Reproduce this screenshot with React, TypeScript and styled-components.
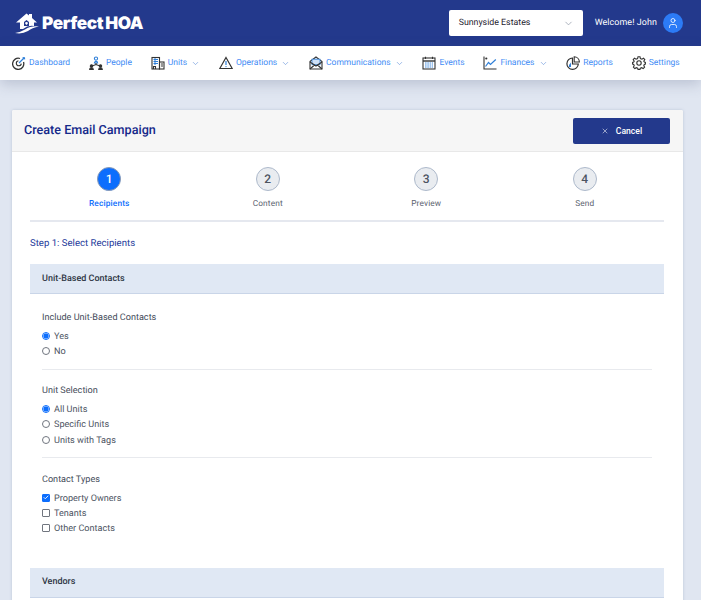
import React from "react";
import styled, { createGlobalStyle } from "styled-components";
import { ChevronDown, User, X, Check } from "lucide-react";

const GlobalStyle = createGlobalStyle`
  html, body {
    margin: 0;
    padding: 0;
    height: 600px;
    overflow: hidden;
    background: #e0e6f1;
    font-family: Roboto, "Liberation Sans", sans-serif;
    text-rendering: geometricPrecision;
  }
`;

const Page = styled.div`
  width: 701px;
  height: 600px;
  overflow: hidden;
`;

const Header = styled.header`
  height: 46px;
  background: #23398c;
  display: flex;
  align-items: center;
  justify-content: space-between;
  padding: 0 18px 0 14px;
`;

const Logo = styled.div`
  display: flex;
  align-items: center;
  gap: 2px;
  color: #fff;
  font-family: Inter, sans-serif;
  font-weight: 900;
  font-size: 17.2px;
  letter-spacing: -0.4px;
  word-spacing: -1px;
`;

const HeaderRight = styled.div`
  display: flex;
  align-items: center;
`;

const CommunitySelect = styled.div`
  width: 134px;
  height: 26px;
  box-sizing: border-box;
  background: #fff;
  border-radius: 2px;
  display: flex;
  align-items: center;
  justify-content: space-between;
  padding: 0 9px 0 10px;
  font-size: 8.8px;
  color: #1f2430;
  margin-right: 12px;
  svg {
    color: #8b93a3;
  }
`;

const Welcome = styled.span`
  color: #fff;
  font-size: 8.9px;
  letter-spacing: 0.1px;
  margin-right: 6px;
`;

const Avatar = styled.div`
  width: 20px;
  height: 20px;
  border-radius: 50%;
  background: #2c7bf6;
  color: #fff;
  display: flex;
  align-items: center;
  justify-content: center;
`;

const Nav = styled.nav`
  height: 34px;
  background: #fff;
  display: flex;
  align-items: center;
  padding-left: 12px;
  gap: 18.8px;
  box-shadow: 0 4px 14px rgba(70, 85, 120, 0.25);
  position: relative;
`;

const NavItem = styled.div`
  display: flex;
  align-items: center;
  color: #3f8cf5;
  font-size: 8.5px;
  white-space: nowrap;
  svg.chev {
    color: #5f8fd8;
    margin-left: 4px;
  }
`;

const NavIcon = styled.svg`
  width: 14px;
  height: 14px;
  margin-right: 3px;
  flex: none;
  fill: none;
  stroke: #333;
  stroke-width: 1.1;
`;

const Main = styled.main`
  padding: 30px 18px 0 12px;
`;

const Card = styled.section`
  background: #fff;
  border-radius: 2px;
  box-shadow: 0 0 3px rgba(120, 135, 165, 0.35);
  height: 520px;
  overflow: hidden;
`;

const CardHeader = styled.div`
  height: 42px;
  box-sizing: border-box;
  background: #f6f6f6;
  border-bottom: 1px solid #e8e8e8;
  display: flex;
  align-items: center;
  justify-content: space-between;
  padding: 0 13px 0 12px;
`;

const CardTitle = styled.h1`
  margin: 0;
  font-size: 12.6px;
  font-weight: 500;
  color: #15298a;
`;

const CancelButton = styled.button`
  width: 97px;
  height: 26px;
  border: none;
  border-radius: 2px;
  background: #23398c;
  color: #fff;
  display: flex;
  align-items: center;
  justify-content: center;
  gap: 7px;
  font-family: inherit;
  font-size: 8.6px;
  font-weight: 500;
  padding: 0;
`;

const CardBody = styled.div`
  padding: 0 19px 0 18px;
`;

const Stepper = styled.div`
  display: grid;
  grid-template-columns: repeat(4, 1fr);
  box-sizing: border-box;
  padding-top: 15px;
  height: 70px;
  border-bottom: 2px solid #e5e8ef;
`;

const Step = styled.div<{ $active?: boolean }>`
  display: flex;
  flex-direction: column;
  align-items: center;
  color: ${({ $active }) => ($active ? "#0d6efd" : "#5c6370")};
  font-size: 8.3px;
  font-weight: ${({ $active }) => ($active ? 500 : 400)};
  letter-spacing: 0.15px;
`;

const StepCircle = styled.div<{ $active?: boolean }>`
  width: 24px;
  height: 24px;
  box-sizing: border-box;
  border-radius: 50%;
  display: flex;
  align-items: center;
  justify-content: center;
  margin-bottom: 8px;
  font-size: 12px;
  font-weight: 500;
  background: ${({ $active }) => ($active ? "#0d6efd" : "#e9ecf0")};
  border: 1px solid ${({ $active }) => ($active ? "#8a9ab5" : "#adb9cb")};
  color: ${({ $active }) => ($active ? "#fff" : "#4c5360")};
`;

const StepTitle = styled.h2`
  margin: 0;
  padding: 16px 0 14px;
  font-size: 9.6px;
  line-height: 12px;
  font-weight: 400;
  color: #23399a;
`;

const SectionHeader = styled.div`
  height: 30px;
  box-sizing: border-box;
  background: #e0e8f4;
  border-bottom: 1px solid #c9d5e8;
  display: flex;
  align-items: center;
  padding: 0 12px;
  font-size: 9px;
  font-weight: 500;
  color: #2f3644;
`;

const SectionBody = styled.div`
  padding: 0 12px 21.5px;
`;

const FieldGroup = styled.div`
  padding: 18px 0 9px;
  & + & {
    border-top: 1px solid #e8eaee;
    padding-top: 15.5px;
  }
`;

const FieldLabel = styled.div`
  font-size: 9.1px;
  line-height: 12px;
  color: #454c5a;
  margin-bottom: 5px;
`;

const Option = styled.div`
  display: flex;
  align-items: center;
  height: 15.4px;
  font-size: 9.1px;
  color: #4d5462;
`;

const RadioMark = styled.span<{ $checked?: boolean }>`
  width: 8px;
  height: 8px;
  box-sizing: border-box;
  border-radius: 50%;
  border: 1px solid ${({ $checked }) => ($checked ? "#0d6efd" : "#71767f")};
  background: ${({ $checked }) =>
    $checked ? "radial-gradient(circle, #0d6efd 2.2px, #cfe2ff 2.8px)" : "#fff"};
  margin: 0 4px 2px 0;
  flex: none;
`;

const CheckMark = styled.span<{ $checked?: boolean }>`
  width: 8px;
  height: 8px;
  box-sizing: border-box;
  border-radius: 1px;
  border: 1px solid ${({ $checked }) => ($checked ? "#0d6efd" : "#71767f")};
  background: ${({ $checked }) => ($checked ? "#0d6efd" : "#fff")};
  color: #fff;
  margin: 0 4px 2px 0;
  flex: none;
  display: flex;
  align-items: center;
  justify-content: center;
`;

const LogoMark = () => (
  <svg width="26" height="22" viewBox="0 0 26 22">
    <path d="M2 10.5 L12.5 1.5 L15 3.6 V2 H18 V6 L23 10.5 H20 V14 Q14 13 9 17 H6 V10.5 Z" fill="#fff" />
    <path d="M10 10 L12.5 8 L15 10 V14 H10 Z" fill="#23398c" />
    <path d="M12.5 10 a1.4 1.4 0 0 1 1.4 1.4 L12.5 13 L11.1 11.4 A1.4 1.4 0 0 1 12.5 10" fill="#fff" />
    <path d="M1 21 Q7 20 11 17.5 Q17 13.5 25 14.5 Q18 15.5 14 19 Q8 22.5 1 21 Z" fill="#fff" />
  </svg>
);

const icons: Record<string, React.ReactNode> = {
  dashboard: (
    <>
      <path d="M11.5 6 A5.6 5.6 0 1 1 8 2.5" strokeWidth="1.3" />
      <path d="M9.3 7.6 A2.5 2.5 0 1 1 6.4 4.8" />
      <path d="M7 7 L11.5 2.5" stroke="#2f7fd8" strokeWidth="1.3" />
      <path d="M10.5 1 L13 1.2 L13.2 3.5 L11 3 Z" fill="#2f7fd8" stroke="none" />
    </>
  ),
  people: (
    <>
      <circle cx="7" cy="2.6" r="1.6" stroke="#2f7fd8" />
      <path d="M5.4 7 a1.6 1.6 0 0 1 3.2 0 Z" stroke="#2f7fd8" />
      <path d="M7 7 V9 M3 10 L7 8.5 L11 10" />
      <circle cx="2.5" cy="10" r="1.2" fill="#333" />
      <circle cx="11.5" cy="10" r="1.2" fill="#333" />
      <path d="M0.7 13.5 a1.8 1.8 0 0 1 3.6 0 Z M9.7 13.5 a1.8 1.8 0 0 1 3.6 0 Z" fill="#333" />
    </>
  ),
  units: (
    <>
      <rect x="1" y="1.5" width="7.5" height="11.5" />
      <rect x="8.5" y="6" width="4.5" height="7" />
      <path d="M2.5 3.5 H7 M2.5 5.5 H7 M2.5 7.5 H7 M4 2 V9" stroke="#2f7fd8" strokeWidth="1" />
      <path d="M2.5 13 V10.5 H4.5 V13 M10 8 H12 M10 10 H12" />
    </>
  ),
  operations: (
    <>
      <path d="M7 1.5 L13.2 12.5 H0.8 Z" strokeWidth="1.2" />
      <path d="M7 5 V9" stroke="#2f7fd8" strokeWidth="1.2" />
      <circle cx="7" cy="10.6" r="0.7" fill="#2f7fd8" stroke="none" />
    </>
  ),
  communications: (
    <>
      <path d="M1 5.5 L7 1 L13 5.5 V13 H1 Z" strokeWidth="1.1" />
      <rect x="3" y="3.2" width="8" height="5.5" fill="#cfe0f5" stroke="#2f7fd8" strokeWidth="0.8" />
      <path d="M1 6 L7 10 L13 6 M1 13 L5.5 9 M13 13 L8.5 9" />
    </>
  ),
  events: (
    <>
      <rect x="1" y="2" width="12" height="11" strokeWidth="1.1" />
      <path d="M1 5 H13" strokeWidth="1.4" />
      <path d="M3.5 0.8 V3 M10.5 0.8 V3" />
      <path d="M3 7 H11 M3 9 H11 M3 11 H11" stroke="#2f7fd8" strokeWidth="0.9" strokeDasharray="1.6 0.7" />
    </>
  ),
  finances: (
    <>
      <path d="M1 0.5 V13 H13.5" strokeWidth="1.1" />
      <path d="M2.5 10.5 L5.5 6.5 L7.5 8.5 L12.8 3.5" stroke="#2f7fd8" strokeWidth="1.2" />
      <circle cx="3.3" cy="2.5" r="1.1" fill="#333" stroke="none" />
    </>
  ),
  reports: (
    <>
      <path d="M6.5 2 A5.7 5.7 0 1 0 12.3 8 H6.5 Z" strokeWidth="1.2" />
      <path d="M8.2 0.8 A5.4 5.4 0 0 1 13.4 6 H8.2 Z" strokeWidth="1.1" />
      <path d="M3 9 L5 6.5 V11 H3 Z" fill="#2f7fd8" stroke="none" />
    </>
  ),
  settings: (
    <>
      <circle cx="7" cy="7" r="2.2" />
      <path
        d="M6 0.8 H8 L8.4 2.6 L9.9 3.2 L11.5 2.2 L12.8 3.6 L11.8 5.2 L12.4 6.1 L13.4 6.4 V8 L12.3 8.4 L11.8 9.5 L12.6 11.2 L11.2 12.6 L9.6 11.7 L8.4 12.1 L8 13.4 H6 L5.6 12.1 L4.4 11.7 L2.8 12.6 L1.4 11.2 L2.2 9.5 L1.7 8.4 L0.6 8 V6.4 L1.7 6.1 L2.2 5.2 L1.2 3.6 L2.5 2.2 L4.1 3.2 L5.6 2.6 Z"
        strokeWidth="1.1"
      />
    </>
  ),
};

const navItems = [
  { key: "dashboard", label: "Dashboard" },
  { key: "people", label: "People" },
  { key: "units", label: "Units", menu: true },
  { key: "operations", label: "Operations", menu: true },
  { key: "communications", label: "Communications", menu: true },
  { key: "events", label: "Events" },
  { key: "finances", label: "Finances", menu: true },
  { key: "reports", label: "Reports" },
  { key: "settings", label: "Settings" },
];

const steps = ["Recipients", "Content", "Preview", "Send"];

const Radio = ({ label, checked }: { label: string; checked?: boolean }) => (
  <Option>
    <RadioMark $checked={checked} />
    {label}
  </Option>
);

const CheckBox = ({ label, checked }: { label: string; checked?: boolean }) => (
  <Option>
    <CheckMark $checked={checked}>{checked && <Check size={7} strokeWidth={3.5} />}</CheckMark>
    {label}
  </Option>
);

export default function App() {
  return (
    <Page>
      <GlobalStyle />
      <Header>
        <Logo>
          <LogoMark />
          <span>Perfect HOA</span>
        </Logo>
        <HeaderRight>
          <CommunitySelect>
            Sunnyside Estates
            <ChevronDown size={11} strokeWidth={1.5} />
          </CommunitySelect>
          <Welcome>Welcome! John</Welcome>
          <Avatar>
            <User size={12} strokeWidth={1.6} />
          </Avatar>
        </HeaderRight>
      </Header>
      <Nav>
        {navItems.map((item) => (
          <NavItem key={item.key}>
            <NavIcon viewBox="0 0 14 14">{icons[item.key]}</NavIcon>
            {item.label}
            {item.menu && <ChevronDown className="chev" size={9} strokeWidth={1.6} />}
          </NavItem>
        ))}
      </Nav>
      <Main>
        <Card>
          <CardHeader>
            <CardTitle>Create Email Campaign</CardTitle>
            <CancelButton>
              <X size={8} strokeWidth={1.6} />
              Cancel
            </CancelButton>
          </CardHeader>
          <CardBody>
            <Stepper>
              {steps.map((label, i) => (
                <Step key={label} $active={i === 0}>
                  <StepCircle $active={i === 0}>{i + 1}</StepCircle>
                  {label}
                </Step>
              ))}
            </Stepper>
            <StepTitle>Step 1: Select Recipients</StepTitle>
            <SectionHeader>Unit-Based Contacts</SectionHeader>
            <SectionBody>
              <FieldGroup>
                <FieldLabel>Include Unit-Based Contacts</FieldLabel>
                <Radio label="Yes" checked />
                <Radio label="No" />
              </FieldGroup>
              <FieldGroup>
                <FieldLabel>Unit Selection</FieldLabel>
                <Radio label="All Units" checked />
                <Radio label="Specific Units" />
                <Radio label="Units with Tags" />
              </FieldGroup>
              <FieldGroup>
                <FieldLabel>Contact Types</FieldLabel>
                <CheckBox label="Property Owners" checked />
                <CheckBox label="Tenants" />
                <CheckBox label="Other Contacts" />
              </FieldGroup>
            </SectionBody>
            <SectionHeader>Vendors</SectionHeader>
          </CardBody>
        </Card>
      </Main>
    </Page>
  );
}
